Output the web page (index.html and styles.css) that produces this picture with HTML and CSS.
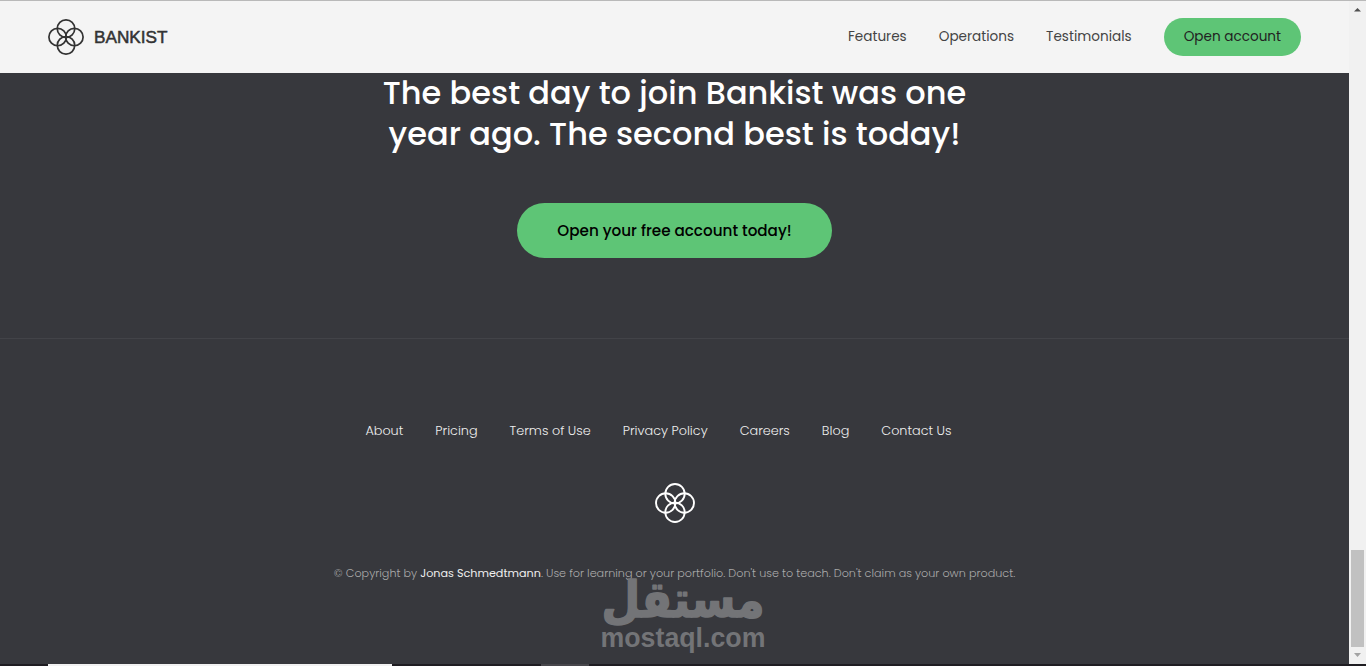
FILE: index.html
```html
<!DOCTYPE html>
<html lang="en">
<head>
<meta charset="UTF-8">
<meta name="viewport" content="width=device-width, initial-scale=1.0">
<title>Bankist | When Banking meets Minimalist</title>
<link rel="stylesheet" href="styles.css">
</head>
<body>

<div class="page">
  <nav class="nav">
    <div class="nav__logo">
      <svg class="nav__icon" viewBox="0 0 40 40">
        <circle cx="20" cy="10.7" r="9.700"/>
        <circle cx="29.3" cy="20" r="9.700"/>
        <circle cx="20" cy="29.3" r="9.700"/>
        <circle cx="10.7" cy="20" r="9.700"/>
      </svg>
      <span class="nav__name">BANKIST</span>
    </div>
    <ul class="nav__links">
      <li><a class="nav__link" href="#">Features</a></li>
      <li><a class="nav__link" href="#">Operations</a></li>
      <li><a class="nav__link" href="#">Testimonials</a></li>
      <li><a class="nav__link nav__link--btn" href="#">Open account</a></li>
    </ul>
  </nav>

  <section class="signup">
    <h3 class="signup__header">The best day to join Bankist was one year ago. The second best is today!</h3>
    <button class="btn">Open your free account today!</button>
  </section>

  <footer class="footer">
    <ul class="footer__nav">
      <li><a class="footer__link" href="#">About</a></li>
      <li><a class="footer__link" href="#">Pricing</a></li>
      <li><a class="footer__link" href="#">Terms of Use</a></li>
      <li><a class="footer__link" href="#">Privacy Policy</a></li>
      <li><a class="footer__link" href="#">Careers</a></li>
      <li><a class="footer__link" href="#">Blog</a></li>
      <li><a class="footer__link" href="#">Contact Us</a></li>
    </ul>
    <svg class="footer__logo" viewBox="0 0 40 40">
      <circle cx="20" cy="10.7" r="9.700"/>
      <circle cx="29.3" cy="20" r="9.700"/>
      <circle cx="20" cy="29.3" r="9.700"/>
      <circle cx="10.7" cy="20" r="9.700"/>
    </svg>
    <p class="footer__copyright">© Copyright by <a class="footer__author" href="#">Jonas Schmedtmann</a>. Use for learning or your portfolio. Don't use to teach. Don't claim as your own product.</p>
  </footer>
</div>

<div class="scrollbar">
  <svg class="scrollbar__arrow" viewBox="0 0 17 17"><path d="M5 10.500h7L8.500 7z" fill="#505050"/></svg>
  <div class="scrollbar__thumb"></div>
  <svg class="scrollbar__arrow" viewBox="0 0 17 17"><path d="M5 6h7l-3.500 4z" fill="#a3a3a3"/></svg>
</div>

<div class="taskbar">
  <div class="taskbar__search"></div>
  <div class="taskbar__item"></div>
</div>

<!-- Watermark -->
<svg class="watermark" viewBox="0 0 170 90">
  <text class="watermark__ar" x="85" y="47" text-anchor="middle" textLength="163" lengthAdjust="spacingAndGlyphs">مستقل</text>
  <text class="watermark__en" x="85" y="77" text-anchor="middle" textLength="165" lengthAdjust="spacingAndGlyphs">mostaql.com</text>
</svg>

</body>
</html>
```
FILE: styles.css
```css
* {
  margin: 0;
  padding: 0;
  box-sizing: border-box;
}

html {
  font-size: 8px;
}

body {
  display: grid;
  grid-template-columns: 1fr 17px;
  grid-template-rows: 1fr 2px;
  height: 666px;
  overflow: hidden;
  border-top: 1px solid #b9b9b9;
  font-family: "Poppins", "Inter", sans-serif;
  font-weight: 300;
  line-height: 1.9;
  color: #444;
  background-color: #37383d;
}

ul {
  list-style: none;
}

a {
  color: inherit;
  text-decoration: none;
}

/* NAVIGATION */
.nav {
  display: flex;
  align-items: center;
  justify-content: space-between;
  height: 9rem;
  padding: 0 6rem;
  background-color: #f4f4f4;
}

.nav__logo {
  display: flex;
  align-items: center;
  gap: 10px;
}

.nav__icon {
  width: 36px;
  height: 36px;
  fill: none;
  stroke: #333;
  stroke-width: 1.9;
}

.nav__name {
  font-family: "Liberation Sans", Arial, sans-serif;
  font-size: 17.2px;
  font-weight: 400;
  color: #333;
  -webkit-text-stroke: 0.5px #333;
}

.nav__links {
  display: flex;
  align-items: center;
  gap: 4rem;
}

.nav__link {
  font-size: 1.7rem;
  font-weight: 400;
}

.nav__link--btn {
  display: block;
  padding: 0.75rem 2.5rem;
  border-radius: 10rem;
  color: #222;
  background-color: #5ec576;
}

/* SIGN UP */
.signup {
  padding-bottom: 10rem;
  text-align: center;
}

.signup__header {
  width: 600px;
  margin: -1px auto 49px;
  font-size: 4rem;
  font-weight: 500;
  line-height: 41px;
  color: #fff;
}

.btn {
  display: block;
  height: 55px;
  margin: 0 auto;
  padding: 0 5rem;
  border: none;
  border-radius: 10rem;
  font-family: inherit;
  font-size: 1.9rem;
  font-weight: 500;
  color: #000;
  background-color: #5ec576;
}

/* FOOTER */
.footer {
  display: flex;
  flex-direction: column;
  align-items: center;
  gap: 5rem;
  padding-top: 10rem;
  border-top: 1px solid #424348;
}

.footer__nav {
  display: flex;
}

.footer__nav li {
  margin-right: 4rem;
  font-size: 1.6rem;
}

.footer__link {
  color: #eee;
}

.footer__logo {
  width: 5rem;
  height: 5rem;
  fill: none;
  stroke: #fff;
  stroke-width: 1.9;
}

.footer__copyright {
  font-size: 1.4rem;
  color: #aaa;
}

.footer__author {
  font-weight: 400;
  color: #eee;
}

/* SCROLLBAR */
.scrollbar {
  display: flex;
  flex-direction: column;
  align-items: center;
  background-color: #f1f1f1;
}

.scrollbar__arrow {
  width: 17px;
  height: 17px;
}

.scrollbar__thumb {
  width: 13px;
  height: 97px;
  margin-top: auto;
  background-color: #c1c1c1;
}

/* TASKBAR */
.taskbar {
  grid-column: 1 / 3;
  display: flex;
  gap: 149px;
  padding-left: 48px;
  background-color: #1f1d22;
}

.taskbar__search {
  width: 344px;
  background-color: #f2f2f2;
}

.taskbar__item {
  width: 48px;
  background-color: #47464b;
}

/* WATERMARK */
.watermark {
  position: absolute;
  left: 598px;
  top: 570px;
  width: 170px;
  height: 90px;
  overflow: visible;
  fill: #737477;
}

.watermark__ar {
  font-family: "DejaVu Sans", sans-serif;
  font-size: 50px;
  font-weight: 700;
  stroke: #737477;
  stroke-width: 1.6;
  stroke-linejoin: round;
}

.watermark__en {
  font-family: "Liberation Sans", Arial, sans-serif;
  font-size: 27px;
  font-weight: 700;
}
```
